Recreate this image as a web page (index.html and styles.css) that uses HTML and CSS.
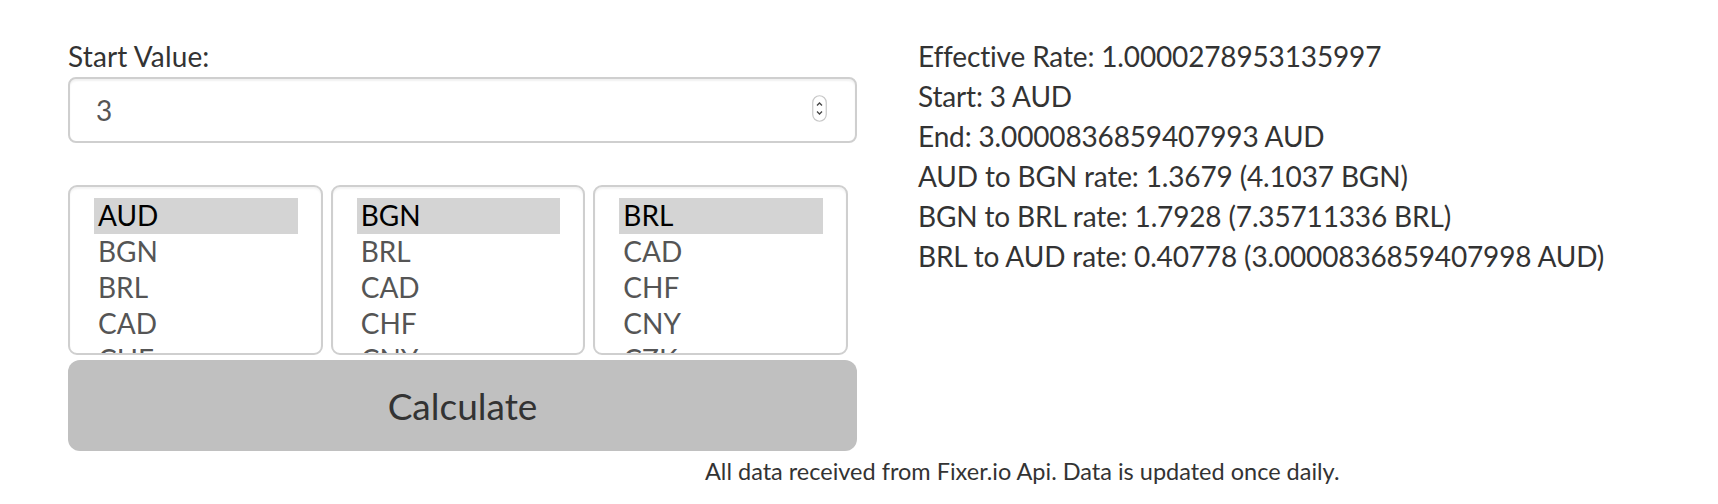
FILE: index.html
```html
<!DOCTYPE html>
<html>
<head>
<meta charset="utf-8">
<link rel="stylesheet" href="styles.css">
</head>
<body>
<div class="page">
  <div class="row">
    <div class="left">
      <label class="label" for="start">Start Value:</label>
      <div class="input-wrap">
        <input id="start" class="input" type="text" value="3">
        <svg class="spinner" width="15" height="27" viewBox="0 0 15 27">
          <rect x="0.75" y="0.75" width="13.5" height="25.5" rx="6.75" fill="#fff" stroke="#c8c8c8" stroke-width="1.2"/>
          <path d="M5 10.5 L7.5 8 L10 10.5" fill="none" stroke="#444" stroke-width="1.3"/>
          <path d="M5 16.5 L7.5 19 L10 16.5" fill="none" stroke="#444" stroke-width="1.3"/>
        </svg>
      </div>
      <div class="selects">
        <div class="select">
          <div class="opt sel">AUD</div>
          <div class="opt">BGN</div>
          <div class="opt">BRL</div>
          <div class="opt">CAD</div>
          <div class="opt">CHF</div>
          <div class="opt">CNY</div>
        </div>
        <div class="select">
          <div class="opt sel">BGN</div>
          <div class="opt">BRL</div>
          <div class="opt">CAD</div>
          <div class="opt">CHF</div>
          <div class="opt">CNY</div>
          <div class="opt">CZK</div>
        </div>
        <div class="select">
          <div class="opt sel">BRL</div>
          <div class="opt">CAD</div>
          <div class="opt">CHF</div>
          <div class="opt">CNY</div>
          <div class="opt">CZK</div>
          <div class="opt">DKK</div>
        </div>
      </div>
      <button class="btn">Calculate</button>
    </div>
    <div class="right">
      <div class="line">Effective Rate: 1.0000278953135997</div>
      <div class="line">Start: 3 AUD</div>
      <div class="line">End: 3.0000836859407993 AUD</div>
      <div class="line">AUD to BGN rate: 1.3679 (4.1037 BGN)</div>
      <div class="line">BGN to BRL rate: 1.7928 (7.35711336 BRL)</div>
      <div class="line">BRL to AUD rate: 0.40778 (3.0000836859407998 AUD)</div>
    </div>
  </div>
  <p class="footer">All data received from Fixer.io Api. Data is updated once daily.</p>
</div>
</body>
</html>
```
FILE: styles.css
```css
* { box-sizing: border-box; }
html, body { margin: 0; padding: 0; background: #fff; }
body {
  font-family: Lato, "Open Sans", sans-serif;
  font-size: 28px;
  line-height: 40px;
  color: #333;
}
.page { padding: 36px 0 0 68px; }
.row { display: flex; align-items: flex-start; }
.left { width: 789px; display: flex; flex-direction: column; }
.right { margin-left: 61px; letter-spacing: -0.15px; }
.line { height: 40px; white-space: nowrap; }
.label { display: block; height: 40px; margin-bottom: 1px; font-weight: normal; letter-spacing: 0.15px; }
.input-wrap { position: relative; height: 66px; }
.input {
  display: block;
  width: 100%;
  height: 66px;
  margin: 0;
  padding: 0 24px 0 26px;
  border: 2px solid #cfcfcf;
  border-radius: 8px;
  font: inherit;
  color: #555;
  background: #fff;
  box-shadow: inset 0 2px 2px rgba(0,0,0,0.06);
  outline: none;
}
.spinner { position: absolute; right: 30px; top: 18px; }
.selects { display: flex; gap: 8px; margin-top: 42px; width: 780px; }
.select {
  flex: 1 1 0;
  min-width: 0;
  height: 170px;
  overflow: hidden;
  border: 2px solid #cfcfcf;
  border-radius: 9px;
  padding: 11px 23px 0 24px;
  background: #fff;
  box-shadow: inset 0 2px 2px rgba(0,0,0,0.05);
}
.opt {
  height: 36px;
  line-height: 33px;
  padding: 1px 4px 2px;
  color: #555;
  white-space: nowrap;
}
.opt.sel { background: #d4d4d4; color: #000; }
.btn {
  margin: 5px 0 0;
  height: 91px;
  width: 100%;
  border: none;
  border-radius: 12px;
  background: #c0c0c0;
  color: #333;
  font-family: Lato, "Open Sans", sans-serif;
  font-size: 37px;
  line-height: 48px;
  padding: 0;
}
.footer {
  margin: 5px 0 0 637px;
  font-size: 23.5px;
  line-height: 30px;
  white-space: nowrap;
}
```
